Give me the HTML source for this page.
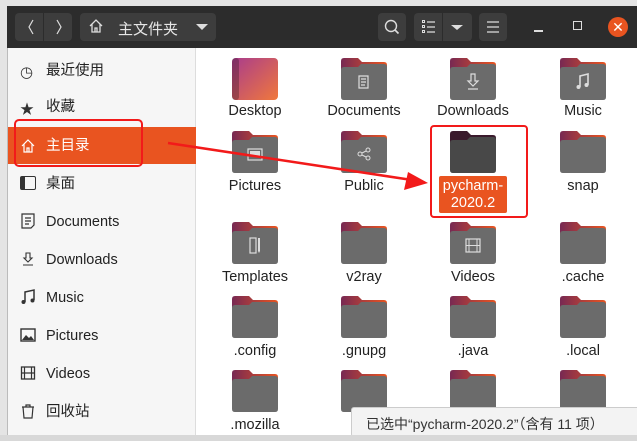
<!DOCTYPE html><html><head><meta charset="utf-8"><style>
*{margin:0;padding:0;box-sizing:border-box}
body{width:637px;height:441px;background:#e4e4e4;position:relative;overflow:hidden;font-family:"Liberation Sans","Noto Sans CJK SC",sans-serif}
.abs{position:absolute}
#win{left:7px;top:6px;width:640px;height:429px;background:#fff;border-left:1px solid #bbb}
#hdr{left:7px;top:6px;width:630px;height:42px;background:#2c2c2c}
.btn{position:absolute;background:#3d3d3d;border-radius:4px;top:13px;height:28px}
.side{left:8px;top:48px;width:188px;height:387px;background:#f6f6f6;border-right:1px solid #ddd}
.si{position:absolute;left:46px;font-size:14.5px;color:#222;line-height:18px}
.ic{position:absolute;left:20px;width:16px;height:16px}
.lbl{position:absolute;width:110px;text-align:center;font-size:14.5px;color:#222;line-height:18px}
.fold{position:absolute;width:46px;height:42px}
</style></head><body>
<div class="abs" id="win"></div>
<div class="abs" id="hdr"></div>
<div class="btn" style="left:15px;width:57px"></div>
<div class="abs" style="left:43px;top:13px;width:1px;height:28px;background:#2c2c2c"></div>
<svg class="abs" style="left:23px;top:18px" width="44" height="18"><path d="M10 2L6 9L10 16M34 2L38 9L34 16" fill="none" stroke="#ddd" stroke-width="1.2"/></svg>
<div class="btn" style="left:80px;width:136px"></div>
<svg class="abs" style="left:88px;top:18px" width="16" height="16" viewBox="0 0 16 16"><path d="M2 8L8 2L14 8M4 6V14H12V6M7 14V10H9V14" fill="none" stroke="#ddd" stroke-width="1.3"/></svg>
<div class="abs" style="left:118px;top:18px;color:#e6e6e6;font-size:15px">主文件夹</div>
<div class="abs" style="left:196px;top:24px;width:0;height:0;border-left:6px solid transparent;border-right:6px solid transparent;border-top:6px solid #ddd"></div>
<div class="btn" style="left:378px;width:28px"></div>
<svg class="abs" style="left:384px;top:19px" width="16" height="16"><circle cx="7" cy="7" r="5.5" fill="none" stroke="#ddd" stroke-width="1.4"/><path d="M11 11L14.5 14.5" stroke="#ddd" stroke-width="1.6"/></svg>
<div class="btn" style="left:414px;width:58px"></div>
<div class="abs" style="left:442px;top:13px;width:1px;height:28px;background:#2c2c2c"></div>
<svg class="abs" style="left:421px;top:19px" width="16" height="16"><g fill="none" stroke="#ddd" stroke-width="1"><rect x="1.5" y="1.5" width="2" height="2"/><rect x="1.5" y="6.5" width="2" height="2"/><rect x="1.5" y="11.5" width="2" height="2"/></g><path d="M6 3h8M6 8h8M6 13h8" stroke="#ddd" stroke-width="1.2"/></svg>
<div class="abs" style="left:451px;top:25px;border-left:6px solid transparent;border-right:6px solid transparent;border-top:5px solid #ddd"></div>
<div class="btn" style="left:479px;width:28px"></div>
<svg class="abs" style="left:485px;top:19px" width="16" height="16"><path d="M2 3h12M2 8h12M2 13h12" stroke="#ddd" stroke-width="1.2"/></svg>
<div class="abs" style="left:534px;top:30px;width:9px;height:1.5px;background:#ddd"></div>
<div class="abs" style="left:573px;top:21px;width:9px;height:9px;border:1.5px solid #ddd"></div>
<div class="abs" style="left:608px;top:17px;width:20px;height:20px;border-radius:50%;background:#e95420;color:#fff;text-align:center;font-size:14px;line-height:20px">✕</div>

<div class="abs side"></div>
<div class="abs" style="left:8px;top:127px;width:188px;height:37px;background:#e95420"></div>
<div class="abs" style="left:14px;top:119px;width:129px;height:48px;border:2px solid #f21a1a;border-radius:5px"></div>
<div class="ic" style="top:63px;font-size:15px;color:#333">◷</div><div class="si" style="top:62px">最近使用</div>
<div class="ic" style="top:99px;font-size:14px;color:#333">★</div><div class="si" style="top:98px">收藏</div>
<svg class="ic" style="top:138px" viewBox="0 0 16 16"><path d="M2 8L8 2L14 8M4 6V14H12V6M7 14V10H9V14" fill="none" stroke="#fff" stroke-width="1.2"/></svg><div class="si" style="top:137px;color:#fff">主目录</div>
<div class="ic" style="top:176px;border:1.5px solid #333;border-left:5px solid #333;border-radius:2px;height:14px"></div><div class="si" style="top:175px">桌面</div>
<svg class="ic" style="top:213px" viewBox="0 0 16 16"><path d="M2 1H14V12L11 15H2Z M5 5H11M5 8H11M5 11H9" fill="none" stroke="#333" stroke-width="1.2"/></svg><div class="si" style="top:213px">Documents</div>
<svg class="ic" style="top:251px" viewBox="0 0 16 16"><path d="M6 2H10V7H12L8 11L4 7H6Z M3 14H13" fill="none" stroke="#333" stroke-width="1.1"/></svg><div class="si" style="top:251px">Downloads</div>
<svg class="ic" style="top:289px" viewBox="0 0 16 16"><path d="M5 13V3L14 1V11" fill="none" stroke="#333" stroke-width="1.5"/><circle cx="3.5" cy="13" r="2" fill="#333"/><circle cx="12.5" cy="11.5" r="2" fill="#333"/></svg><div class="si" style="top:289px">Music</div>
<svg class="ic" style="top:327px" viewBox="0 0 16 16"><rect x="1" y="2" width="14" height="12" fill="none" stroke="#333" stroke-width="1.4"/><path d="M2 13L6 8L9 11L11 9L14 13Z" fill="#333"/></svg><div class="si" style="top:327px">Pictures</div>
<svg class="ic" style="top:365px" viewBox="0 0 16 16"><rect x="1.5" y="2" width="13" height="12" fill="none" stroke="#333" stroke-width="1.3"/><path d="M4.5 2V14M11.5 2V14M1.5 8H14.5" stroke="#333" stroke-width="1.2"/></svg><div class="si" style="top:365px">Videos</div>
<svg class="ic" style="top:403px" viewBox="0 0 16 16"><path d="M2 4H14M6 4V2H10V4M3 4L4 15H12L13 4" fill="none" stroke="#333" stroke-width="1.2"/></svg><div class="si" style="top:403px">回收站</div>

<svg width="0" height="0" style="position:absolute"><defs>
<linearGradient id="tab" x1="0" y1="0" x2="1" y2="0"><stop offset="0" stop-color="#772953"/><stop offset="1" stop-color="#e95420"/></linearGradient>
<linearGradient id="dsk" x1="0" y1="0" x2="1" y2="1"><stop offset="0" stop-color="#a93c8c"/><stop offset="1" stop-color="#f0783c"/></linearGradient>
</defs></svg>

<div id="grid"></div>
<script>
var cols=[255,364,473,583];
var items=[
[0,58,111,"Desktop","d"],[1,58,111,"Documents","doc"],[2,58,111,"Downloads","dl"],[3,58,111,"Music","mu"],
[0,131,186,"Pictures","pic"],[1,131,186,"Public","pub"],[2,131,0,"","sel"],[3,131,186,"snap",""],
[0,222,277,"Templates","tpl"],[1,222,277,"v2ray",""],[2,222,277,"Videos","vid"],[3,222,277,".cache",""],
[0,296,351,".config",""],[1,296,351,".gnupg",""],[2,296,351,".java",""],[3,296,351,".local",""],
[0,370,425,".mozilla",""],[1,370,425,".r",""],[2,370,0,"",""],[3,370,0,"",""]];
var glyph={doc:'<path d="M18 18H27V30H18Z M20 21H25M20 24H25M20 27H24" fill="none" stroke="#ddd" stroke-width="1.2"/>',
dl:'<path d="M21 16H25V23H28L23 28L18 23H21Z M18 31H28" fill="none" stroke="#ddd" stroke-width="1.2"/>',
mu:'<path d="M20 29V18L28 16V27" fill="none" stroke="#ddd" stroke-width="1.6"/><circle cx="18.5" cy="29" r="2" fill="#ddd"/><circle cx="26.5" cy="27" r="2" fill="#ddd"/>',
pic:'<rect x="16" y="18" width="14" height="11" fill="none" stroke="#ddd" stroke-width="1.2"/><rect x="18" y="20" width="10" height="5" fill="#ddd"/>',
pub:'<circle cx="27" cy="19" r="2" fill="none" stroke="#ddd"/><circle cx="19" cy="23" r="2" fill="none" stroke="#ddd"/><circle cx="27" cy="27" r="2" fill="none" stroke="#ddd"/><path d="M21 22L25 20M21 24L25 26" stroke="#ddd"/>',
tpl:'<rect x="18" y="16" width="6" height="15" fill="none" stroke="#ddd" stroke-width="1.2"/><path d="M26 16V29L27 31L28 29V16Z" fill="#ddd"/>',
vid:'<rect x="16" y="17" width="14" height="13" fill="none" stroke="#ddd" stroke-width="1.2"/><path d="M19 17V30M27 17V30M16 23.5H30" stroke="#ddd"/>'};
var h='';
items.forEach(function(it){var cx=cols[it[0]],x=cx-23,y=it[1];
if(it[4]=="d"){h+='<svg class="fold" style="left:'+x+'px;top:'+y+'px" viewBox="0 0 46 42"><rect x="0" y="0" width="46" height="42" rx="4" fill="url(#dsk)"/><rect x="0" y="0" width="7" height="42" rx="3" fill="#000" opacity=".25"/></svg>';}
else{var sel=it[4]=="sel";h+='<svg class="fold" style="left:'+x+'px;top:'+y+'px" viewBox="0 0 46 42"><path d="M3 0H17L21 4H43Q46 4 46 7V20H0V3Q0 0 3 0Z" fill="'+(sel?'#3a1a2c':'url(#tab)')+'"/><path d="M0 12Q0 9 3 9H17L20 6H43Q46 6 46 9V39Q46 42 43 42H3Q0 42 0 39Z" fill="'+(sel?'#484848':'#6b6b6b')+'"/>'+(glyph[it[4]]||'')+'</svg>';}
if(it[3])h+='<div class="lbl" style="left:'+(cx-55)+'px;top:'+(it[2]-9)+'px">'+it[3]+'</div>';});
document.getElementById('grid').innerHTML=h;
</script>
<div class="abs" style="left:439px;top:176px;width:68px;height:37px;background:#e95420;border-radius:2px;color:#fff;font-size:14.5px;line-height:17px;text-align:center;padding-top:2px">pycharm-<br>2020.2</div>
<div class="abs" style="left:430px;top:125px;width:98px;height:93px;border:2px solid #f21a1a;border-radius:4px"></div>
<svg class="abs" style="left:0;top:0" width="637" height="441"><path d="M168 143L412 180" stroke="#f21a1a" stroke-width="2.5"/><path d="M428 183L404 190L408 172Z" fill="#f21a1a"/></svg>
<div class="abs" style="left:351px;top:407px;width:290px;height:30px;background:#f3f3f3;border:1px solid #ccc;border-radius:3px;font-size:14px;color:#333;padding:6px 0 0 14px">已选中“pycharm-2020.2”（含有 11 项）</div>
<div class="abs" style="left:0;top:435px;width:637px;height:6px;background:#d8d8d8"></div>
</body></html>
